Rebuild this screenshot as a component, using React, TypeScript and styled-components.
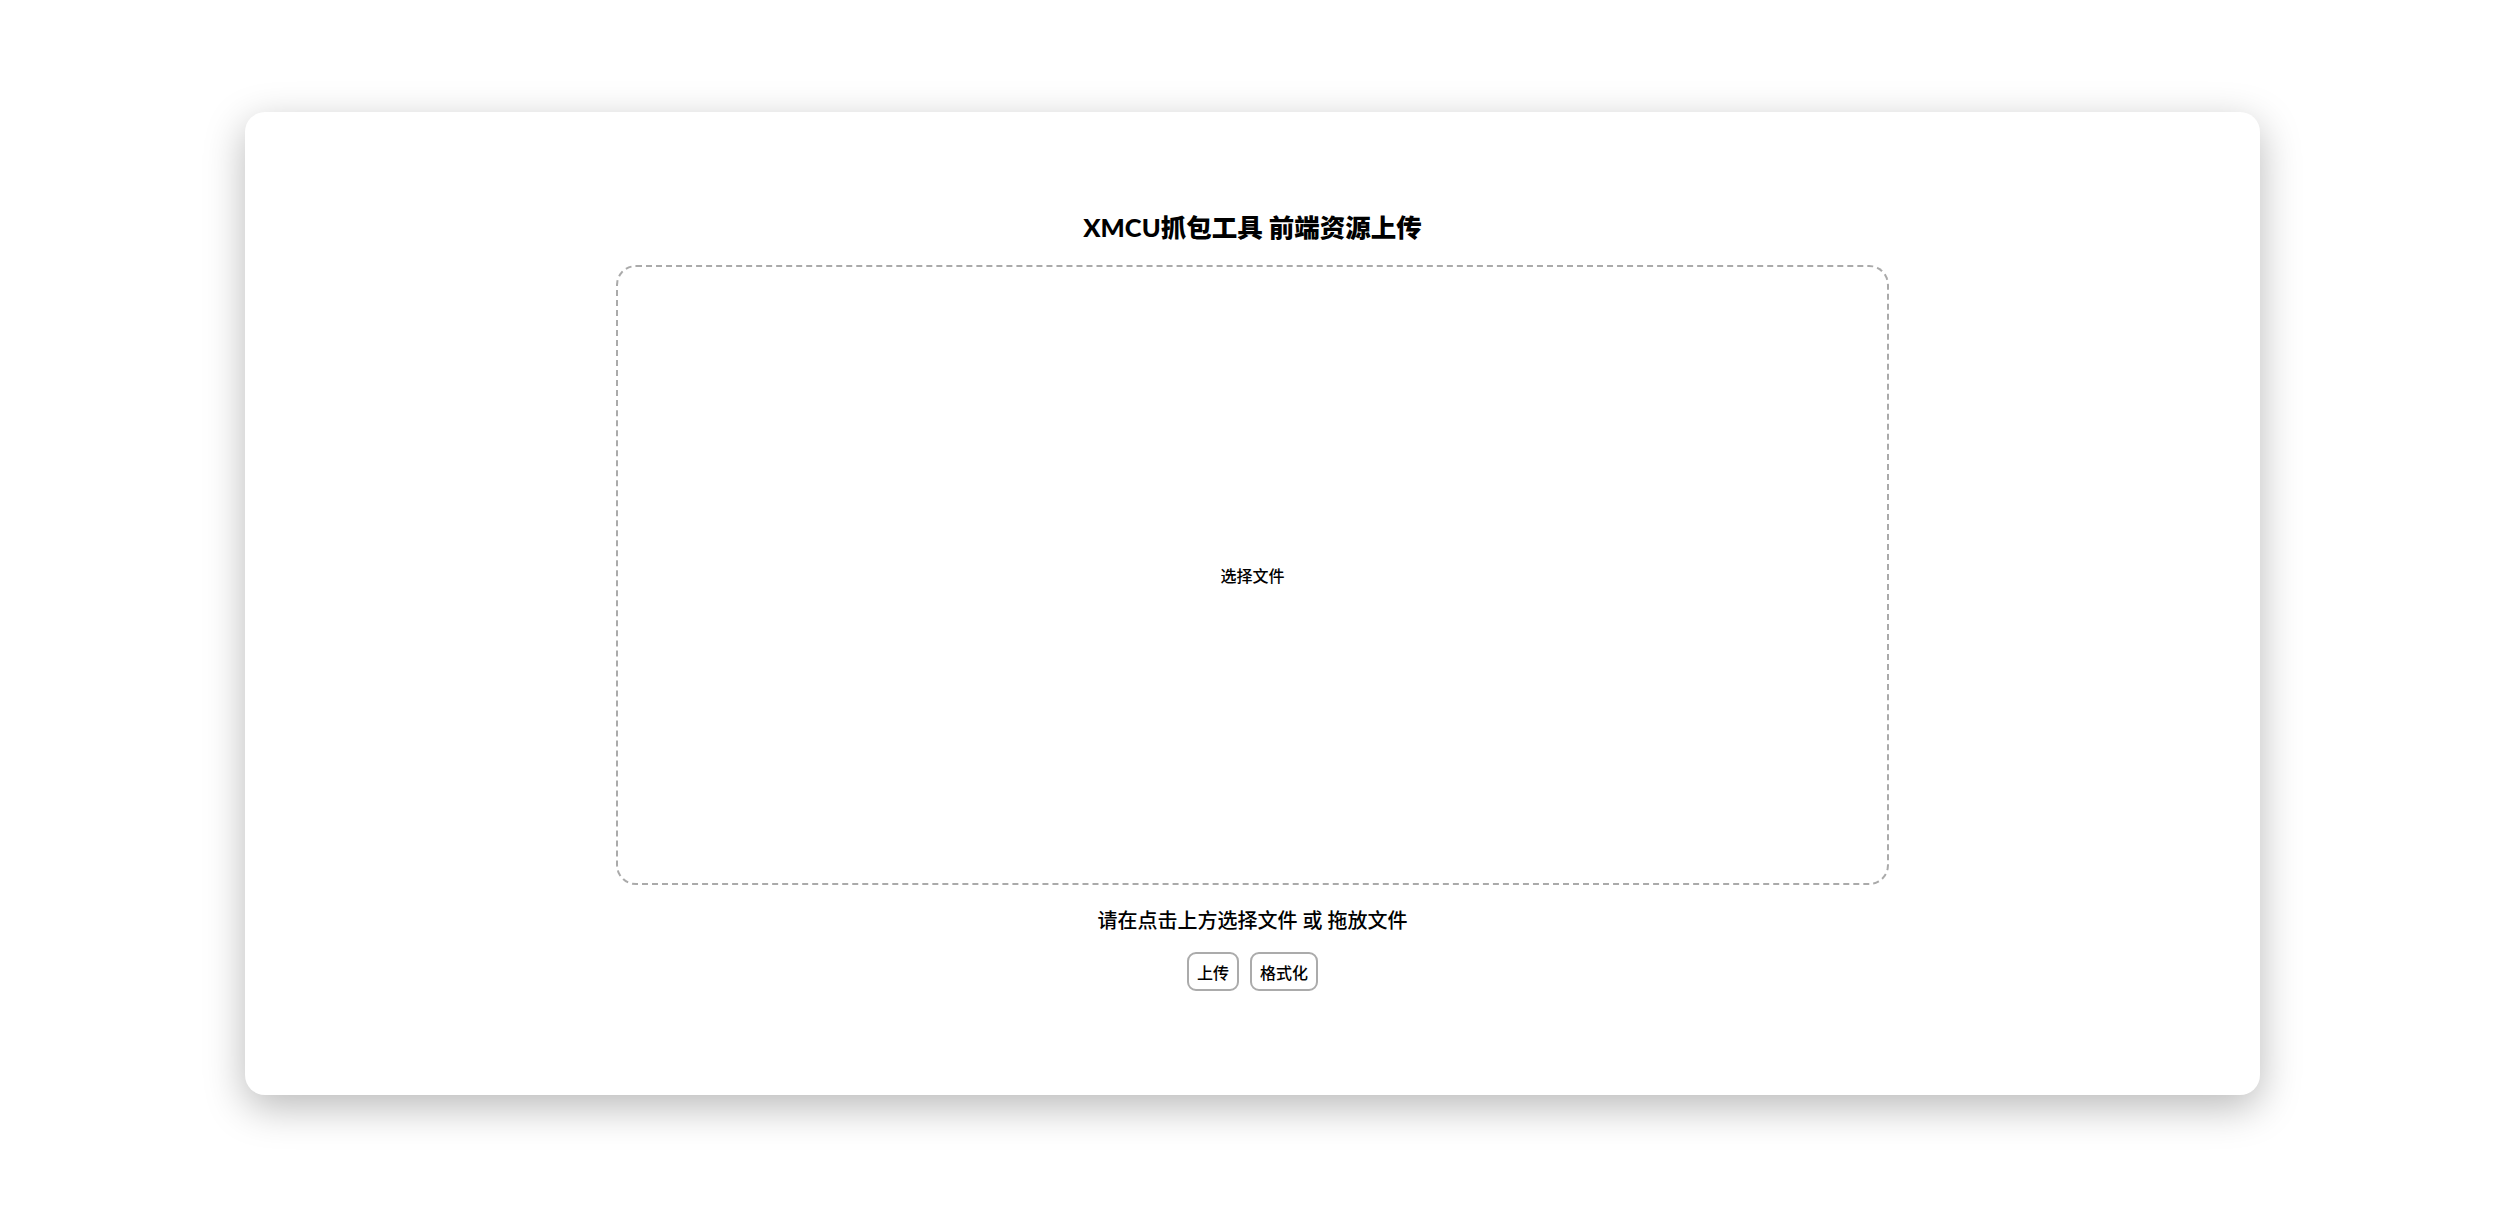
import React from "react";
import styled, { createGlobalStyle } from "styled-components";

const Global = createGlobalStyle`
  html, body { margin: 0; padding: 0; background: #ffffff; }
  body { font-family: "Lato", "Noto Sans CJK SC", sans-serif; color: #000; }
  * { box-sizing: border-box; }
`;

const Page = styled.div`
  width: 2514px;
  height: 1211px;
  padding: 112px 0 0 245px;
  overflow: hidden;
`;

const Card = styled.div`
  width: 2015px;
  height: 983px;
  background: #ffffff;
  border-radius: 20px;
  box-shadow: 0 12px 40px rgba(0, 0, 0, 0.28);
  display: flex;
  flex-direction: column;
  align-items: center;
  padding-top: 97px;
`;

const Title = styled.h1`
  margin: 0;
  font-family: "Lato", "Noto Sans CJK SC", sans-serif;
  font-weight: 900;
  font-size: 25.5px;
  line-height: 36px;
  color: #000;
`;

const DropZone = styled.label`
  margin-top: 20px;
  width: 1273px;
  height: 620px;
  border: 2px dashed #aaaaaa;
  border-radius: 20px;
  display: flex;
  align-items: center;
  justify-content: center;
  cursor: pointer;
  font-family: "Noto Sans CJK SC", sans-serif;
  font-weight: 500;
  font-size: 16px;
  color: #000;
`;

const Hint = styled.p`
  margin: 22px 0 0;
  font-family: "Lato", "Noto Sans CJK SC", sans-serif;
  font-weight: 500;
  font-size: 20px;
  line-height: 26px;
  color: #000;
`;

const Actions = styled.div`
  margin-top: 19px;
  display: flex;
  gap: 11px;
`;

const Button = styled.button`
  height: 39px;
  padding: 0 8px;
  border: 2px solid #ababab;
  border-radius: 9px;
  background: #ffffff;
  font-family: "Noto Sans CJK SC", sans-serif;
  font-weight: 500;
  font-size: 16px;
  color: #000;
  cursor: pointer;
`;

export default function App() {
  return (
    <>
      <Global />
      <Page>
        <Card>
          <Title>XMCU抓包工具 前端资源上传</Title>
          <DropZone>选择文件</DropZone>
          <Hint>请在点击上方选择文件 或 拖放文件</Hint>
          <Actions>
            <Button>上传</Button>
            <Button>格式化</Button>
          </Actions>
        </Card>
      </Page>
    </>
  );
}
